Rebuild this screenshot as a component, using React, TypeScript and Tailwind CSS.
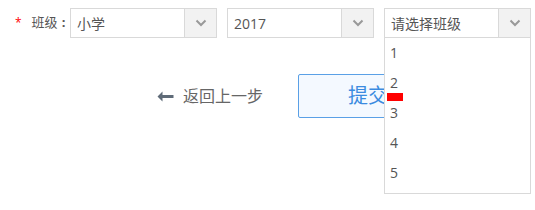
const FONT = "font-['Open_Sans','Noto_Sans_CJK_SC',sans-serif]";

function Chevron() {
  return (
    <svg width="12" height="8" viewBox="0 0 12 8" fill="none">
      <path d="M1.5 1.5 L6 6 L10.5 1.5" stroke="#999" strokeWidth="2" />
    </svg>
  );
}

function Select({ value, children }: { value: string; children?: React.ReactNode }) {
  return (
    <div className="relative flex h-[30px] w-[147px] shrink-0 border border-[#d9d9d9] bg-white">
      <div className="flex flex-1 items-center pl-[6px] text-[14px] text-[#555]">{value}</div>
      <div className="flex w-[32px] items-center justify-center border-l border-[#d9d9d9] bg-[#f2f2f2]">
        <Chevron />
      </div>
      {children}
    </div>
  );
}

export default function App() {
  const options = ["1", "2", "3", "4", "5"];
  return (
    <div className={"relative h-[210px] w-[535px] bg-white " + FONT}>
      {/* filter row */}
      <div className="flex items-center pt-2">
        <div className="flex w-[70px] shrink-0 items-center whitespace-nowrap pl-[15px] text-[13px] text-[#555]">
          <span className="mr-[10px] text-[12px] text-[#f00]">*</span>
          <span>班级</span>
          <span className="ml-[4px] font-bold">:</span>
        </div>
        <Select value="小学" />
        <div className="w-[10px] shrink-0" />
        <Select value="2017" />
        <div className="w-[10px] shrink-0" />
        <Select value="请选择班级">
          <div className="absolute left-[-1px] top-[29px] z-10 h-[156px] w-[147px] border border-t-0 border-[#d9d9d9] bg-white">
            {options.map((o) => (
              <div key={o} className="flex h-[30px] items-center pb-[2px] pl-[5px] text-[14px] text-[#555]">
                {o}
              </div>
            ))}
            <div className="absolute left-[2px] top-[55px] h-[8px] w-[16px] bg-[#f00]" />
          </div>
        </Select>
      </div>

      {/* actions */}
      <div className="mt-[36px] flex items-center pl-[157px]">
        <div className="flex items-center whitespace-nowrap text-[16px] text-[#666]">
          <svg width="17" height="11" viewBox="0 0 17 11" className="mr-[9px]">
            <path d="M5.5 0.5 L0.5 5.5 L5.5 10.5 L5.5 7 L16.5 7 L16.5 4 L5.5 4 Z" fill="#5f6b78" />
          </svg>
          返回上一步
        </div>
        <div className="ml-[35px] flex h-[44px] w-[140px] shrink-0 items-center justify-center rounded-[2px] border border-[#5aa0e6] bg-[#f4f9ff] text-[20px] text-[#3b8be0]">
          提交
        </div>
      </div>
    </div>
  );
}
